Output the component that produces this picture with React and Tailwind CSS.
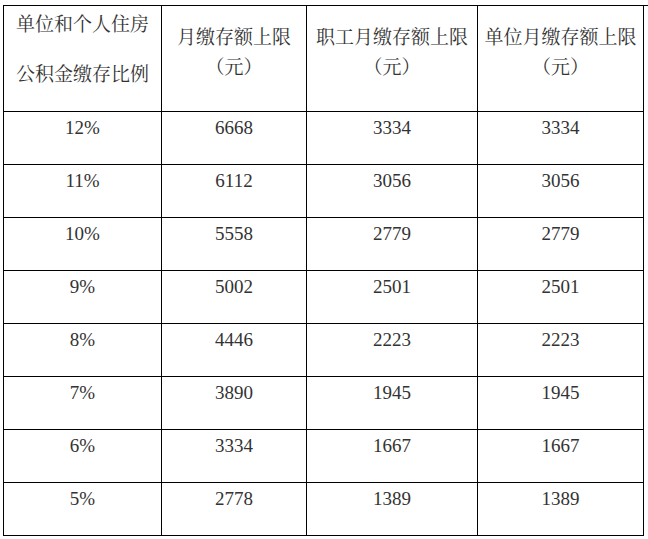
import React from "react";

const rows = [
  ["12%", "6668", "3334", "3334"],
  ["11%", "6112", "3056", "3056"],
  ["10%", "5558", "2779", "2779"],
  ["9%", "5002", "2501", "2501"],
  ["8%", "4446", "2223", "2223"],
  ["7%", "3890", "1945", "1945"],
  ["6%", "3334", "1667", "1667"],
  ["5%", "2778", "1389", "1389"],
];

const font = {
  fontFamily:
    '"Liberation Serif", "Noto Serif CJK SC", "Noto Sans CJK SC", serif',
};

export default function App() {
  return (
    <div className="w-[648px] h-[539px] bg-white pl-[3px] pt-[5px]" style={font}>
      <div className="grid grid-cols-[158px_145px_171px_166px] border-l border-t border-black text-[19px] leading-[26px] text-[#333]">
        <div className="h-[106px] border-r border-b border-black pt-[6px] flex flex-col items-center gap-[24px]">
          <span>单位和个人住房</span>
          <span>公积金缴存比例</span>
        </div>
        <div className="h-[106px] border-r border-b border-black pt-[19px] flex flex-col items-center gap-[4px]">
          <span>月缴存额上限</span>
          <span>（元）</span>
        </div>
        <div className="h-[106px] border-r border-b border-black pt-[19px] flex flex-col items-center gap-[4px]">
          <span>职工月缴存额上限</span>
          <span>（元）</span>
        </div>
        <div className="h-[106px] border-r border-b border-black pt-[19px] flex flex-col items-center gap-[4px]">
          <span>单位月缴存额上限</span>
          <span>（元）</span>
        </div>
        {rows.map((r, i) =>
          r.map((c, j) => (
            <div
              key={i + "-" + j}
              className="h-[53px] border-r border-b border-black pt-[3px] text-center"
            >
              {c}
            </div>
          ))
        )}
      </div>
    </div>
  );
}
